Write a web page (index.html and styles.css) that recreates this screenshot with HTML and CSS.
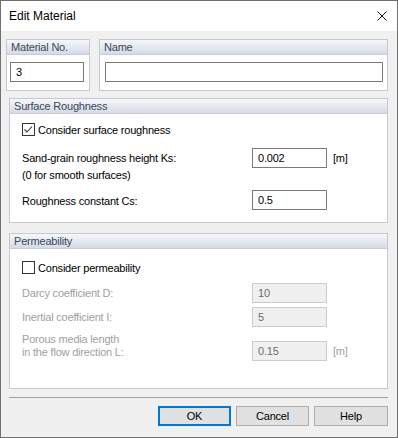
FILE: index.html
```html
<!DOCTYPE html>
<html>
<head>
<meta charset="utf-8">
<link rel="stylesheet" href="styles.css">
</head>
<body>
<div class="dialog">
  <div class="titlebar">
    <span class="title">Edit Material</span>
    <svg class="close" width="10" height="10" viewBox="0 0 10 10"><path d="M0.5 0.5 L9.5 9.5 M9.5 0.5 L0.5 9.5" stroke="#111" stroke-width="1" fill="none"/></svg>
  </div>
  <div class="content">
    <div class="toprow">
      <div class="group g-no">
        <div class="ghead">Material No.</div>
        <div class="gbody gbody-top"><input class="field w-no" type="text" value="3" readonly></div>
      </div>
      <div class="group g-name">
        <div class="ghead">Name</div>
        <div class="gbody gbody-top"><input class="field w-name" type="text" value="" readonly></div>
      </div>
    </div>

    <div class="group g-wide g-surface">
      <div class="ghead">Surface Roughness</div>
      <div class="gbody body-surface">
        <div class="check">
          <span class="box"><svg width="11" height="11" viewBox="0 0 11 11"><path d="M1.5 5.5 L4 8 L9 2.5" stroke="#333" stroke-width="1.1" fill="none"/></svg></span>
          <span class="clabel">Consider surface roughness</span>
        </div>
        <div class="row row-ks">
          <div class="label"><div class="l1">Sand-grain roughness height Ks:</div><div class="l2">(0 for smooth surfaces)</div></div>
          <input class="field w-val" type="text" value="0.002" readonly>
          <span class="unit">[m]</span>
        </div>
        <div class="row row-cs">
          <div class="label"><div class="l1 l1-low">Roughness constant Cs:</div></div>
          <input class="field w-val" type="text" value="0.5" readonly>
        </div>
      </div>
    </div>

    <div class="group g-wide g-perm">
      <div class="ghead">Permeability</div>
      <div class="gbody body-perm">
        <div class="check">
          <span class="box"></span>
          <span class="clabel">Consider permeability</span>
        </div>
        <div class="row row-d">
          <div class="label dis"><div class="l1">Darcy coefficient D:</div></div>
          <input class="field w-val off" type="text" value="10" disabled>
        </div>
        <div class="row row-i">
          <div class="label dis"><div class="l1">Inertial coefficient I:</div></div>
          <input class="field w-val off" type="text" value="5" disabled>
        </div>
        <div class="row row-l">
          <div class="label dis two"><div>Porous media length</div><div>in the flow direction L:</div></div>
          <input class="field w-val off" type="text" value="0.15" disabled>
          <span class="unit dis">[m]</span>
        </div>
      </div>
    </div>

    <div class="sep"></div>

    <div class="buttons">
      <button class="btn btn-ok">OK</button>
      <button class="btn">Cancel</button>
      <button class="btn btn-help">Help</button>
    </div>
  </div>
</div>
</body>
</html>
```

FILE: styles.css
```css
* { box-sizing: border-box; }
html, body { margin: 0; padding: 0; background: #f0f0f0; }
body {
  font-family: "Liberation Sans", Arial, sans-serif;
  font-size: 11px;
  color: #000;
}
.dialog {
  width: 398px;
  height: 438px;
  border: 1px solid #707070;
  background: #f0f0f0;
  display: flex;
  flex-direction: column;
}
.titlebar {
  height: 30px;
  background: #fff;
  display: flex;
  align-items: center;
  justify-content: space-between;
  padding: 0 10px 0 8px;
}
.title { font-size: 12px; color: #000; position: relative; top: 0; }
.close { display: block; margin-top: 0; }

.content {
  flex: 1;
  display: flex;
  flex-direction: column;
  padding: 0 9px 0 8px;
  letter-spacing: -0.2px;
}
.toprow {
  display: flex;
  margin-top: 8px;
  margin-left: -3px;
}
.group {
  border: 1px solid #c3c9d6;
  background: #fff;
}
.g-no { width: 84px; }
.g-name { width: 289px; margin-left: 9px; }
.ghead {
  height: 15px;
  line-height: 14px;
  padding-left: 4px;
  color: #3b4658;
  background: linear-gradient(#f6f7fa, #d6dae5);
  border-bottom: 1px solid #c7ccd9;
}
.gbody-top { padding: 7px 0 8px 3px; height: 35px; }
.g-name .gbody-top { padding-left: 5px; }

.field {
  display: block;
  height: 20px;
  border: 1px solid #7a7a7a;
  background: #fff;
  font-family: "Liberation Sans", Arial, sans-serif;
  font-size: 11px;
  letter-spacing: -0.2px;
  color: #000;
  padding: 0 0 0 5px;
  margin: 0;
  outline: none;
}
.w-no { width: 74px; }
.w-name { width: 278px; }
.w-val { width: 75px; }
.field.off {
  background: #f0f0f0;
  border-color: #cccccc;
  color: #6d6d6d;
  -webkit-text-fill-color: #6d6d6d;
}

.g-wide { width: 379px; }
.g-surface { margin-top: 7px; }
.g-perm { margin-top: 10px; }

.body-surface { padding: 9px 0 12px 12px; }
.body-perm { padding: 12px 0 27px 12px; }

.check { display: flex; align-items: center; height: 13px; }
.box {
  width: 13px;
  height: 13px;
  border: 1px solid #333;
  background: #fff;
  display: flex;
  align-items: center;
  justify-content: center;
}
.box svg { display: block; }
.clabel { margin-left: 3px; line-height: 13px; position: relative; top: 1px; }

.row { display: flex; align-items: flex-start; }
.label { width: 230px; }
.l1 { line-height: 20px; }
.l1-low { padding-top: 2px; line-height: 18px; }
.l2 { line-height: 15px; margin-top: 0; }
.unit { margin-left: 6px; line-height: 20px; }
.dis { color: #a0a0a0; }

.row-ks { margin-top: 12px; height: 35px; }
.row-cs { margin-top: 7px; }
.row-d { margin-top: 9px; }
.row-i { margin-top: 4px; }
.row-l { margin-top: 6px; align-items: flex-end; height: 28px; }
.row-l .unit { line-height: 20px; }
.two { line-height: 13px; margin-bottom: 2px; align-self: flex-start; }

.sep {
  height: 1px;
  background: #a0a0a0;
  margin-top: 8px;
  width: 379px;
}
.buttons {
  display: flex;
  justify-content: flex-end;
  gap: 5px;
  margin-top: 8px;
  width: 379px;
}
.btn {
  width: 73px;
  height: 20px;
  border: 1px solid #adadad;
  background: #e1e1e1;
  font-family: "Liberation Sans", Arial, sans-serif;
  font-size: 11px;
  letter-spacing: -0.2px;
  color: #000;
  padding: 0;
  margin: 0;
}
.btn-help { width: 74px; }
.btn-ok { border: 2px solid #0078d7; }
```
